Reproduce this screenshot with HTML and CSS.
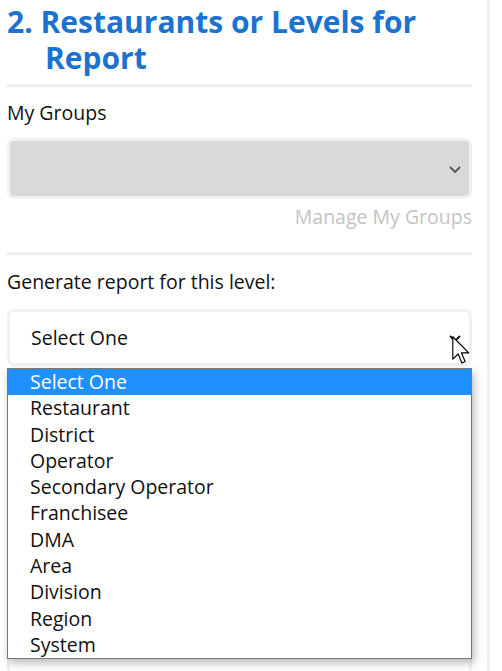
FILE: index.html
```html
<!DOCTYPE html>
<html lang="en">
<head>
    <meta charset="UTF-8">
    <meta name="viewport" content="width=device-width, initial-scale=1.0">
    <title>Report Setup</title>
    <link rel="stylesheet" href="styles.css">
</head>
<body>
    <div class="panel">
        <h2 class="step-title">2. Restaurants or Levels for Report</h2>
        <hr class="divider">

        <label class="field-label">My Groups</label>
        <div class="select select-disabled">
            <svg class="chevron" width="12" height="7" viewBox="0 0 12 7">
                <path d="M1 1 L6 6 L11 1" fill="none" stroke="#555" stroke-width="1.8"/>
            </svg>
        </div>
        <div class="manage-row">
            <a class="manage-link">Manage My Groups</a>
        </div>
        <hr class="divider">

        <label class="field-label label-level">Generate report for this level:</label>
        <div class="select select-open">
            <span class="select-value">Select One</span>
            <svg class="chevron" width="12" height="7" viewBox="0 0 12 7">
                <path d="M1 1 L6 6 L11 1" fill="none" stroke="#111" stroke-width="1.8"/>
            </svg>
            <svg class="pointer" width="19" height="29" viewBox="0 0 13 20">
                <path d="M0.5 0.5 L0.5 16 L4.2 12.4 L6.8 18.6 L9 17.6 L6.4 11.6 L11.5 11.6 Z" fill="#fff" stroke="#000" stroke-width="0.8" stroke-linejoin="round"/>
            </svg>
            <ul class="options">
                <li class="option active">Select One</li>
                <li class="option">Restaurant</li>
                <li class="option">District</li>
                <li class="option">Operator</li>
                <li class="option">Secondary Operator</li>
                <li class="option">Franchisee</li>
                <li class="option">DMA</li>
                <li class="option">Area</li>
                <li class="option">Division</li>
                <li class="option">Region</li>
                <li class="option">System</li>
            </ul>
        </div>
        <div class="listbox"></div>
    </div>
</body>
</html>
```

FILE: styles.css
```css
body {
    margin: 0;
    font-family: "Open Sans", Lato, sans-serif;
    color: #111;
    background: #fff;
}

.panel {
    width: 465px;
    padding: 0 15px 0 7px;
    border-right: 3px solid #f0f0f0;
    min-height: 671px;
}

.step-title {
    margin: 0;
    padding: 4px 0 0 38px;
    text-indent: -38px;
    font-size: 30px;
    line-height: 36px;
    font-weight: 700;
    color: #1a72d1;
}

.divider {
    margin: 8px 0 0;
    border: none;
    height: 3px;
    background: #eeeeee;
}

.field-label {
    display: block;
    margin-top: 14px;
    font-size: 19.5px;
    line-height: 24px;
}

.label-level {
    margin-top: 15px;
}

.select {
    position: relative;
    box-sizing: border-box;
    height: 61px;
    margin-top: 13px;
    border: 3px solid #f1f1f1;
    border-radius: 7px;
    display: flex;
    align-items: center;
}

.select-disabled {
    background: #d8d9d8;
}

.select-open {
    height: 57px;
    margin-top: 15px;
    background: #fff;
}

.select-value {
    padding-left: 21px;
    font-size: 19.5px;
}

.chevron {
    position: absolute;
    right: 8px;
    top: 50%;
    margin-top: -3px;
}

.pointer {
    position: absolute;
    left: 442px;
    top: 24px;
    z-index: 3;
}

.manage-row {
    text-align: right;
    margin-top: 6px;
    font-size: 19.5px;
    line-height: 24px;
}

.manage-link {
    color: #c4c4c4;
}

.manage-row + .divider {
    margin-top: 23px;
}

.options {
    position: absolute;
    top: 56px;
    left: -3px;
    right: -3px;
    z-index: 2;
    margin: 0;
    padding: 0;
    list-style: none;
    background: #fff;
    border: 1px solid #777;
    box-shadow: 2px 4px 8px rgba(0, 0, 0, 0.28);
}

.option {
    height: 26.3px;
    line-height: 26px;
    padding-left: 22px;
    font-size: 19.5px;
}

.option.active {
    background: #1e90ff;
    color: #fff;
}

.listbox {
    box-sizing: border-box;
    height: 320px;
    margin-top: 14px;
    border: 3px solid #f1f1f1;
    border-radius: 7px;
}
```
